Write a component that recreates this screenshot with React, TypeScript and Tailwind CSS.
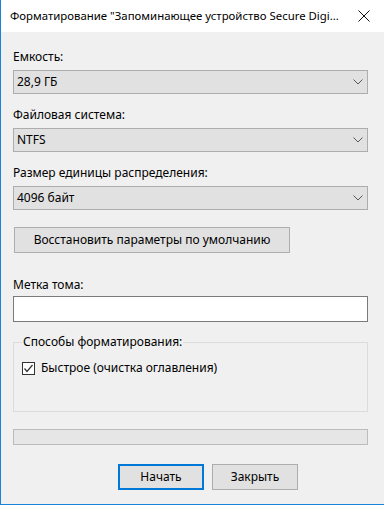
import React from 'react';

const font = { fontFamily: '"Noto Sans", "Open Sans", sans-serif' };

function Chevron() {
    return (
        <svg width="10" height="6" viewBox="0 0 10 6" className="shrink-0">
            <path d="M0.5 0.5 L5 5 L9.5 0.5" fill="none" stroke="#5a5a5a" strokeWidth="1" />
        </svg>
    );
}

function Combo({ value }: { value: string }) {
    return (
        <div className="mt-[5px] h-[24px] w-[355px] border border-[#adadad] bg-[#e1e1e1] flex items-center justify-between pl-[3px] pr-[4px]">
            <span className="text-[12px] leading-[16px] text-black">{value}</span>
            <Chevron />
        </div>
    );
}

export default function App() {
    return (
        <div
            className="w-[384px] h-[505px] border-l border-b border-[#1883d7] bg-[#f0f0f0] flex flex-col overflow-hidden text-black"
            style={font}
        >
            {/* Title bar */}
            <div className="h-[32px] bg-white flex items-center justify-between pl-[9px] pr-[14px] shrink-0">
                <span className="text-[11.4px] leading-[16px] whitespace-nowrap">
                    Форматирование "Запоминающее устройство Secure Digi...
                </span>
                <svg width="12" height="12" viewBox="0 0 12 12" className="shrink-0">
                    <path d="M0.5 0.5 L11.5 11.5 M11.5 0.5 L0.5 11.5" stroke="#111" strokeWidth="1" />
                </svg>
            </div>

            {/* Body */}
            <div className="flex flex-col pl-[12px]">
                <div className="mt-[17px] text-[12px] leading-[16px]">Емкость:</div>
                <Combo value="28,9 ГБ" />

                <div className="mt-[13px] text-[12px] leading-[16px]">Файловая система:</div>
                <Combo value="NTFS" />

                <div className="mt-[13px] text-[12px] leading-[16px]">Размер единицы распределения:</div>
                <Combo value="4096 байт" />

                <button className="mt-[17px] ml-[1px] h-[26px] w-[276px] border border-[#adadad] bg-[#e1e1e1] text-[12px] leading-[16px] text-black">
                    Восстановить параметры по умолчанию
                </button>

                <div className="mt-[24px] text-[12px] leading-[16px]">Метка тома:</div>
                <div className="mt-[3px] h-[26px] w-[355px] border border-[#7a7a7a] bg-white" />

                <fieldset className="mt-[12px] w-[355px] border border-[#dcdcdc] pl-[8px] pb-[35px]">
                    <legend className="px-[1px] text-[12px] leading-[16px]">Способы форматирования:</legend>
                    <label className="mt-[10px] flex items-center gap-[6px] h-[16px]">
                        <span className="w-[13px] h-[13px] border border-[#333] bg-white flex items-center justify-center">
                            <svg width="11" height="11" viewBox="0 0 11 11">
                                <path d="M1.5 5.5 L4 8.5 L9.5 2" fill="none" stroke="#333" strokeWidth="1.2" />
                            </svg>
                        </span>
                        <span className="text-[12px] leading-[16px]">Быстрое (очистка оглавления)</span>
                    </label>
                </fieldset>

                <div className="mt-[17px] h-[16px] w-[355px] border border-[#bcbcbc] bg-[#e6e6e6]" />

                <div className="mt-[19px] flex gap-[8px] pl-[105px]">
                    <button className="h-[26px] w-[86px] border-2 border-[#0078d7] bg-[#e1e1e1] text-[12px] leading-[16px] text-black">
                        Начать
                    </button>
                    <button className="h-[26px] w-[86px] border border-[#adadad] bg-[#e1e1e1] text-[12px] leading-[16px] text-black">
                        Закрыть
                    </button>
                </div>
            </div>
        </div>
    );
}
